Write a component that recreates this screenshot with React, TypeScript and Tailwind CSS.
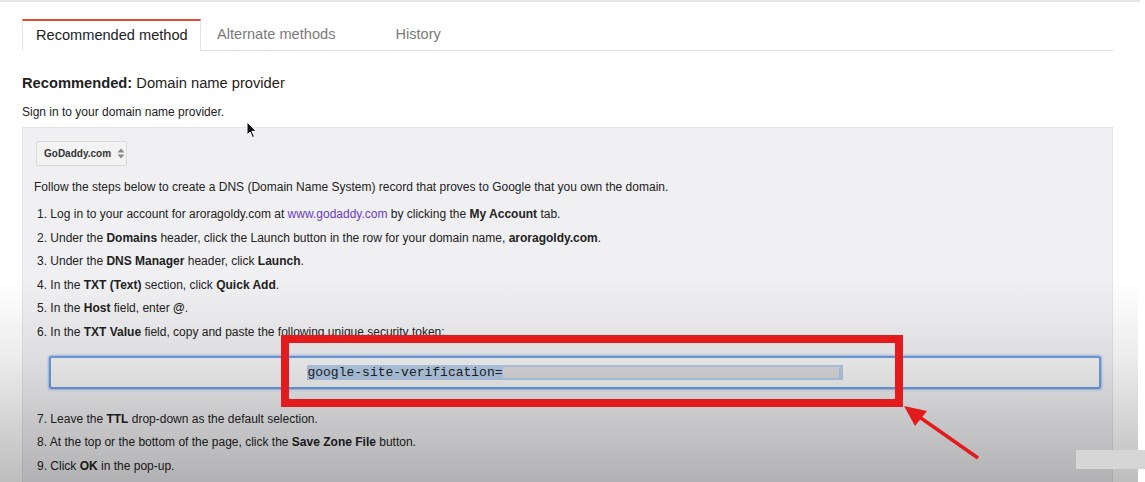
import React from "react";

const Step = ({ n, children }: { n: number; children: React.ReactNode }) => (
  <li className="h-[23.6px] leading-[23.6px] pl-[3px] whitespace-nowrap">
    {n}. {children}
  </li>
);

export default function App() {
  return (
    <div
      className="relative w-[1145px] h-[482px] overflow-hidden bg-white text-[#222]"
      style={{ fontFamily: '"Liberation Sans", Arial, sans-serif' }}
    >
      <div className="h-[2px] w-[1140px] bg-[#e6e6e6]" />
      <div className="pl-[22px] w-[1113px]">
        {/* Tabs */}
        <div className="mt-[17px] flex items-end h-[32px] border-b border-[#dedede]">
          <div className="h-[32px] -mb-px w-[179px] pl-[13px] flex items-center bg-white border-t-2 border-t-[#dd4b39] border-x border-x-[#e2e2e2] text-[14.6px] text-[#222] whitespace-nowrap">
            Recommended method
          </div>
          <div className="h-[31px] pl-[16px] flex items-center text-[14.6px] text-[#7a7a7a]">
            Alternate methods
          </div>
          <div className="h-[31px] pl-[60px] flex items-center text-[14.6px] text-[#7a7a7a]">
            History
          </div>
        </div>

        <div className="mt-[23px] text-[14.7px] leading-[18px]">
          <span className="font-bold">Recommended:</span> Domain name provider
        </div>
        <div className="mt-[12px] text-[12px] leading-[16px]">Sign in to your domain name provider.</div>

        {/* Gray box */}
        <div className="mt-[7px] h-[400px] border border-[#e3e3e3] bg-[#f0eff1] pl-[11px] pr-[10px] pt-[13px] text-[12px]">
          <div className="ml-[2px] w-[91px] h-[25px] border border-[#d9d9d9] bg-[#f3f3f4] rounded-[2px] flex items-center pl-[7px] gap-[6px] text-[10px] font-bold text-[#333]">
            GoDaddy.com
            <svg className="shrink-0" width="8" height="11" viewBox="0 0 8 11">
              <path d="M4 0.5 L7.5 4.5 L0.5 4.5 Z" fill="#8a8a8a" />
              <path d="M4 10.5 L7.5 6.5 L0.5 6.5 Z" fill="#8a8a8a" />
            </svg>
          </div>
          <div className="mt-[9px] leading-[24px]">
            Follow the steps below to create a DNS (Domain Name System) record that proves to Google that you own the domain.
          </div>
          <ol className="mt-[4px]">
            <Step n={1}>
              Log in to your account for aroragoldy.com at{" "}
              <span className="text-[#6a3dc8]">www.godaddy.com</span> by clicking the{" "}
              <b>My Account</b> tab.
            </Step>
            <Step n={2}>
              Under the <b>Domains</b> header, click the Launch button in the row for your domain name,{" "}
              <b>aroragoldy.com</b>.
            </Step>
            <Step n={3}>
              Under the <b>DNS Manager</b> header, click <b>Launch</b>.
            </Step>
            <Step n={4}>
              In the <b>TXT (Text)</b> section, click <b>Quick Add</b>.
            </Step>
            <Step n={5}>
              In the <b>Host</b> field, enter <b>@</b>.
            </Step>
            <Step n={6}>
              In the <b>TXT Value</b> field, copy and paste the following unique security token:
            </Step>
          </ol>
          <div className="mt-[11px] ml-[15px] w-[1052px] h-[33px] border-2 border-[#6f9fe2] rounded-[3px] bg-[#f6f6f7] shadow-[0_0_2px_1px_rgba(110,160,230,0.6)] flex items-center justify-center">
            <span className="flex items-center bg-[#b5cde9] h-[15px]">
              <span
                className="text-[13px] leading-[15px] text-[#222]"
                style={{ fontFamily: '"Liberation Mono", "Courier New", monospace' }}
              >
                google-site-verification=
              </span>
              <span className="inline-block w-[336px] h-[11px] mr-[4px] bg-[#dcdcde]" />
            </span>
          </div>
          <ol className="mt-[19px]">
            <Step n={7}>
              Leave the <b>TTL</b> drop-down as the default selection.
            </Step>
            <Step n={8}>
              At the top or the bottom of the page, click the <b>Save Zone File</b> button.
            </Step>
            <Step n={9}>
              Click <b>OK</b> in the pop-up.
            </Step>
          </ol>
        </div>
      </div>

      {/* video shading overlay */}
      <div
        className="absolute left-0 top-[280px] w-[1138px] h-[202px] pointer-events-none"
        style={{ background: "linear-gradient(to bottom, rgba(0,0,0,0) 0%, rgba(0,0,0,0.08) 40%, rgba(0,0,0,0.26) 100%)" }}
      />

      {/* mouse cursor */}
      <svg className="absolute left-[246px] top-[121px]" width="12" height="18" viewBox="0 0 12 18">
        <path d="M1 1 L1 14 L4 11 L6.5 16.5 L8.5 15.6 L6 10.3 L10.2 10.3 Z" fill="#111" stroke="#fff" strokeWidth="1" />
      </svg>

      {/* red annotation box */}
      <div className="absolute left-[281px] top-[335px] w-[622px] h-[72px] border-[8px] border-[#e31b1d]" />

      {/* red arrow */}
      <svg className="absolute left-0 top-0" width="1145" height="482" viewBox="0 0 1145 482">
        <line x1="978" y1="458" x2="918" y2="416" stroke="#e31b1d" strokeWidth="3.5" />
        <polygon points="904,406 927,411 915,426" fill="#e31b1d" />
      </svg>

      {/* small gray element */}
      <div className="absolute left-[1076px] top-[450px] w-[69px] h-[19px] bg-[#d6d6d6]" />
    </div>
  );
}
